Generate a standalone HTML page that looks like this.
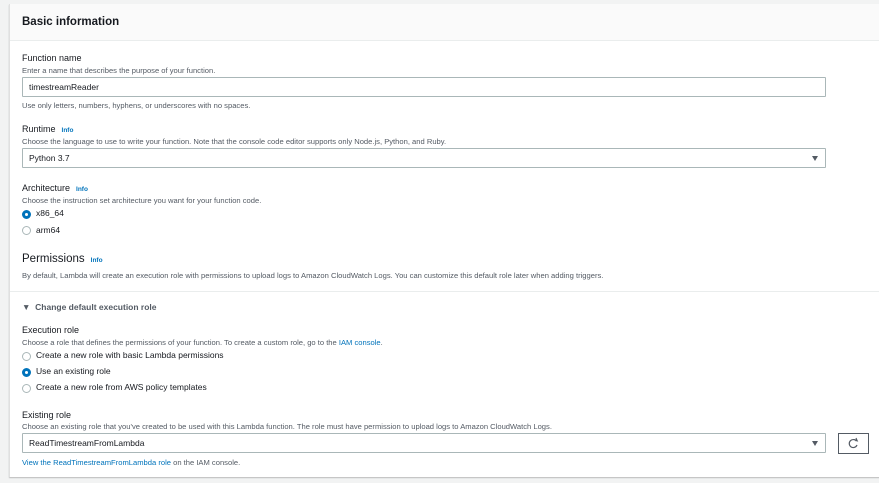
<!DOCTYPE html><html><head><style>
body{margin:0;width:879px;height:483px;background:#f2f3f3;font-family:"Liberation Sans",sans-serif;color:#16191f;position:relative;overflow:hidden}
.p{position:absolute;left:9px;top:4px;width:875px;height:473px;background:#fff;border-left:1px solid #e0e0e0;box-shadow:0 1px 1px #bbb}
.h{position:absolute;left:0;top:0;right:0;height:36px;background:#fafafa;border-bottom:1px solid #eaeded}
.a{position:absolute;white-space:nowrap}
.l{font-size:9px;color:#16191f}
.d{font-size:7.6px;color:#545b64}
.i{font-size:6.5px;color:#0073bb;font-weight:bold;margin-left:6px}
.in{position:absolute;left:12px;width:796px;height:18px;border:1px solid #aab7b8;border-radius:1px;font-size:8.5px;line-height:18px;padding-left:6px;box-sizing:content-box}
.ar{position:absolute;right:7px;top:7px;width:0;height:0;border-left:3.5px solid transparent;border-right:3.5px solid transparent;border-top:5px solid #545b64}
.r{position:absolute;width:7px;height:7px;border:1px solid #aab7b8;border-radius:50%}
.rs{border:3px solid #0073bb;width:3px;height:3px}
.t{font-size:8.5px}
</style></head><body>
<div class="p">
<div class="h"></div>
<div class="a" style="left:12px;top:12px;font-size:11.5px;font-weight:bold">Basic information</div>
<div class="a l" style="left:12px;top:49px">Function name</div>
<div class="a d" style="left:12px;top:62px">Enter a name that describes the purpose of your function.</div>
<div class="in" style="top:73px">timestreamReader</div>
<div class="a d" style="left:12px;top:97px">Use only letters, numbers, hyphens, or underscores with no spaces.</div>
<div class="a l" style="left:12px;top:120px">Runtime<span class="i">Info</span></div>
<div class="a d" style="left:12px;top:133px">Choose the language to use to write your function. Note that the console code editor supports only Node.js, Python, and Ruby.</div>
<div class="in" style="top:144px">Python 3.7<div class="ar"></div></div>
<div class="a l" style="left:12px;top:179px">Architecture<span class="i">Info</span></div>
<div class="a d" style="left:12px;top:192px">Choose the instruction set architecture you want for your function code.</div>
<div class="r rs" style="left:12px;top:206px"></div><div class="a t" style="left:26px;top:204px">x86_64</div>
<div class="r" style="left:12px;top:222px"></div><div class="a t" style="left:26px;top:221px">arm64</div>
<div class="a" style="left:12px;top:249px;font-size:11.5px">Permissions<span class="i">Info</span></div>
<div class="a d" style="left:12px;top:267px">By default, Lambda will create an execution role with permissions to upload logs to Amazon CloudWatch Logs. You can customize this default role later when adding triggers.</div>
<div style="position:absolute;left:0;right:0;top:287px;border-top:1px solid #eaeded"></div>
<div class="a" style="left:12px;top:298px;font-size:8.5px;font-weight:bold;color:#545b64">▼&nbsp; Change default execution role</div>
<div class="a l" style="left:12px;top:321px">Execution role</div>
<div class="a d" style="left:12px;top:334px">Choose a role that defines the permissions of your function. To create a custom role, go to the <span style="color:#0073bb">IAM console</span>.</div>
<div class="r" style="left:12px;top:348px"></div><div class="a t" style="left:26px;top:346px">Create a new role with basic Lambda permissions</div>
<div class="r rs" style="left:12px;top:364px"></div><div class="a t" style="left:26px;top:362px">Use an existing role</div>
<div class="r" style="left:12px;top:380px"></div><div class="a t" style="left:26px;top:378px">Create a new role from AWS policy templates</div>
<div class="a l" style="left:12px;top:406px">Existing role</div>
<div class="a d" style="left:12px;top:418px">Choose an existing role that you've created to be used with this Lambda function. The role must have permission to upload logs to Amazon CloudWatch Logs.</div>
<div class="in" style="top:429px">ReadTimestreamFromLambda<div class="ar"></div></div>
<div class="a" style="left:828px;top:429px;width:29px;height:19px;border:1px solid #545b64;">
<svg width="29" height="19" viewBox="0 0 29 19"><path d="M17.5 7.2 A4 4 0 1 0 18 11" fill="none" stroke="#545b64" stroke-width="1.2"/><path d="M15.5 5.5 L18.2 6.8 L17 4" fill="none" stroke="#545b64" stroke-width="1.1"/></svg></div>
<div class="a d" style="left:12px;top:454px"><span style="color:#0073bb">View the ReadTimestreamFromLambda role</span> on the IAM console.</div>
</div>
</body></html>
